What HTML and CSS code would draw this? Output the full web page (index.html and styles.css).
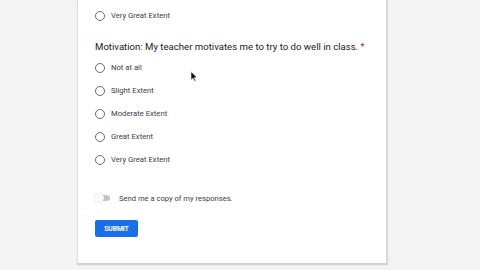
FILE: index.html
```html
<!DOCTYPE html>
<html lang="en">

<head>
    <meta charset="UTF-8">
    <meta name="viewport" content="width=device-width, initial-scale=1.0">
    <title>Form</title>
    <link rel="stylesheet" href="styles.css">
</head>

<body>
    <main class="card">
        <div class="opt"><span class="radio"></span>Very Great Extent</div>

        <div class="question">Motivation: My teacher motivates me to try to do well in class. <span class="star">*</span></div>
        <div class="opt"><span class="radio"></span>Not at all</div>
        <div class="opt"><span class="radio"></span>Slight Extent</div>
        <div class="opt"><span class="radio"></span>Moderate Extent</div>
        <div class="opt"><span class="radio"></span>Great Extent</div>
        <div class="opt"><span class="radio"></span>Very Great Extent</div>

        <div class="copy">
            <span class="switch"><span class="thumb"></span></span>
            Send me a copy of my responses.
        </div>

        <button class="submit">SUBMIT</button>
    </main>

    <!-- mouse pointer -->
    <svg class="cursor" width="8" height="11" viewBox="0 0 8 11">
        <path d="M1 0.5 L1 9 L3 7.2 L4.6 10.3 L5.8 9.7 L4.3 6.7 L7 6.5 Z" fill="#111" stroke="#fff" stroke-width="0.6"/>
    </svg>
</body>

</html>
```

FILE: styles.css
```css
body,
html {
    margin: 0;
    padding: 0;
    height: 100%;
    background: #f3f3f3;
    font-family: Roboto, "Liberation Sans", sans-serif;
    overflow: hidden;
}

.card {
    margin-left: 77px;
    width: 311px;
    height: 263px;
    padding: 4px 0 0 17px;
    box-sizing: border-box;
    background: #fff;
    border-left: 1px solid #e2e2e2;
    border-right: 2px solid #dadada;
    box-shadow: 0 2px 1px #d2d2d2;
}

.opt {
    height: 23px;
    display: flex;
    align-items: center;
    font-size: 7.7px;
    color: #3c3c3c;
}

.radio {
    width: 8px;
    height: 8px;
    border: 1.3px solid #6a6a6a;
    border-radius: 50%;
    margin-right: 6px;
}

.question {
    margin: 13px 0 2px;
    line-height: 14px;
    font-size: 9.6px;
    color: #202020;
}

.star {
    color: #c5221f;
}

.copy {
    margin-top: 20px;
    height: 14px;
    display: flex;
    align-items: center;
    font-size: 7.6px;
    color: #3c3c3c;
}

.switch {
    position: relative;
    width: 15px;
    height: 6px;
    margin-right: 9px;
    border-radius: 3px;
    background: #c4c4c4;
}

.thumb {
    position: absolute;
    left: -1px;
    top: -2px;
    width: 10px;
    height: 10px;
    border-radius: 50%;
    background: #f8f8f8;
    box-shadow: 0 0 1px rgba(0, 0, 0, .25);
}

.submit {
    margin-top: 15px;
    width: 43px;
    height: 17px;
    padding: 0;
    border: none;
    border-radius: 2px;
    background: #1a6fe6;
    color: #fff;
    font-family: Roboto, "Liberation Sans", sans-serif;
    font-size: 6.8px;
    font-weight: bold;
    letter-spacing: -0.1px;
}

.cursor {
    position: absolute;
    left: 190px;
    top: 71px;
}
```
